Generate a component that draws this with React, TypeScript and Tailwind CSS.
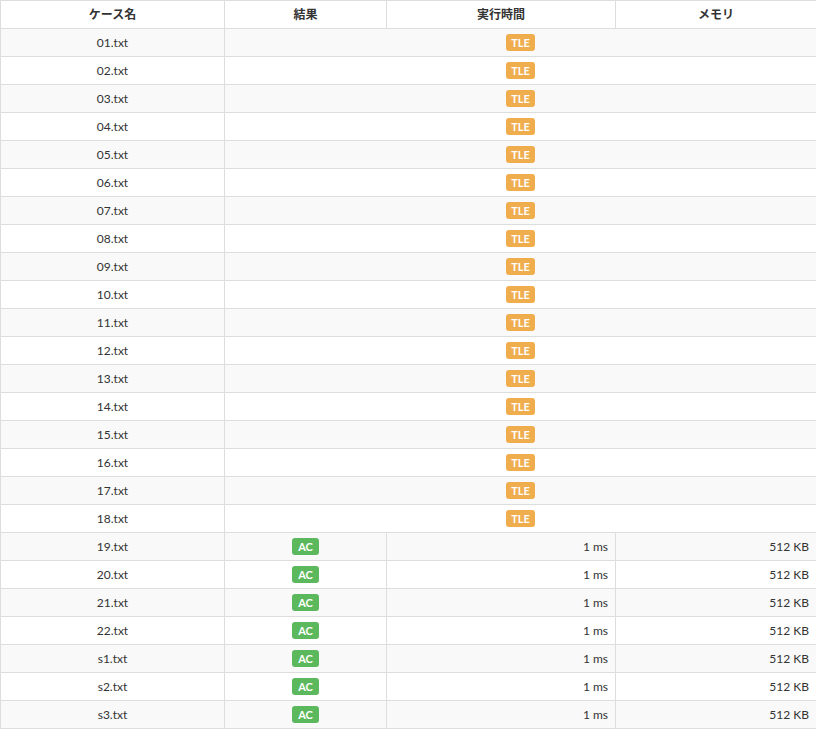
const rows: [string, boolean][] = [];
for (let i = 1; i <= 22; i++) rows.push([String(i).padStart(2, "0") + ".txt", i > 18]);
["s1.txt", "s2.txt", "s3.txt"].forEach((s) => rows.push([s, true]));

export default function App() {
  return (
    <div className="w-[816px] bg-white" style={{ fontFamily: "Lato, 'Noto Sans CJK JP', sans-serif" }}>
      <table className="border-collapse table-fixed w-[816px] text-[12px] text-[#333]">
        <colgroup>
          <col className="w-[224px]" />
          <col className="w-[162px]" />
          <col className="w-[229px]" />
          <col className="w-[201px]" />
        </colgroup>
        <thead>
          <tr className="h-[28px]">
            {["ケース名", "結果", "実行時間", "メモリ"].map((h) => (
              <th key={h} className="border border-[#ddd] font-bold text-center p-0">{h}</th>
            ))}
          </tr>
        </thead>
        <tbody>
          {rows.map(([name, ac], i) => (
            <tr key={name} className={`h-[28px] ${i % 2 === 0 ? "bg-[#f9f9f9]" : "bg-white"}`}>
              <td className="border border-[#ddd] text-center p-0">{name}</td>
              {ac ? (
                <>
                  <td className="border border-[#ddd] text-center p-0">
                    <span className="inline-block bg-[#5cb85c] text-white font-bold text-[11px] leading-[17px] px-[6px] rounded-[3px]">AC</span>
                  </td>
                  <td className="border border-[#ddd] text-right pr-[7px]">1 ms</td>
                  <td className="border border-[#ddd] text-right pr-[7px]">512 KB</td>
                </>
              ) : (
                <td colSpan={3} className="border border-[#ddd] text-center p-0">
                  <span className="inline-block bg-[#f0ad4e] text-white font-bold text-[11px] leading-[17px] px-[5px] rounded-[3px]">TLE</span>
                </td>
              )}
            </tr>
          ))}
        </tbody>
      </table>
    </div>
  );
}
